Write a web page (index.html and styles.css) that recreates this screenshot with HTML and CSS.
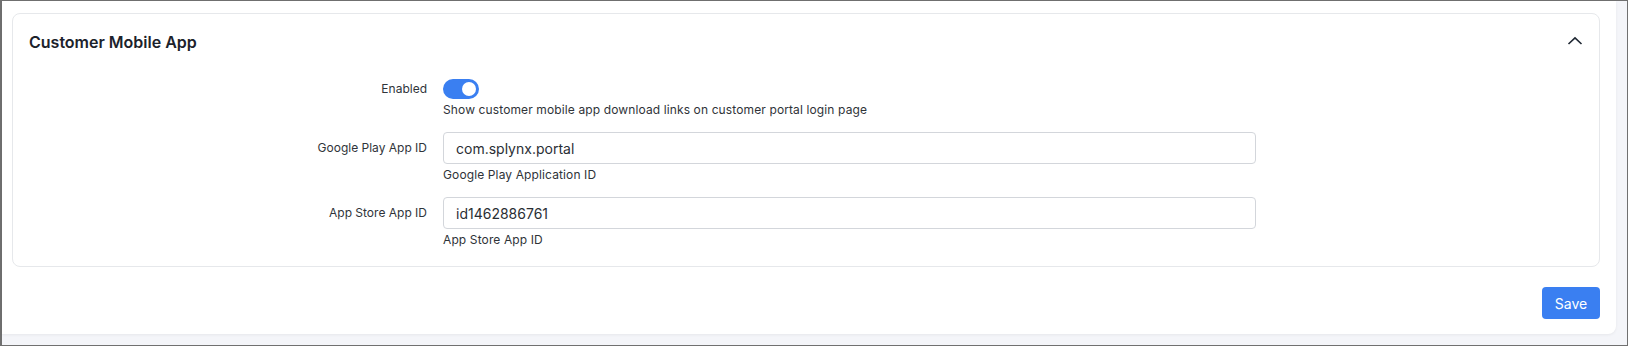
FILE: index.html
```html
<!DOCTYPE html>
<html lang="en">
<head>
    <meta charset="UTF-8">
    <meta name="viewport" content="width=device-width, initial-scale=1.0">
    <title>Customer Mobile App</title>
    <link rel="stylesheet" href="styles.css">
</head>
<body>
    <div class="frame">
        <div class="page">
            <div class="card">
                <div class="card-header">
                    <h2>Customer Mobile App</h2>
                    <button class="collapse-btn" type="button" aria-label="Collapse">
                        <svg width="16" height="10" viewBox="0 0 16 10">
                            <path d="M1.5 8 L8 1.8 L14.5 8" fill="none" stroke="#1f2733" stroke-width="1.6"/>
                        </svg>
                    </button>
                </div>
                <div class="card-body">
                    <div class="form-row">
                        <label class="form-label" for="enabled">Enabled</label>
                        <div class="form-control">
                            <label class="switch">
                                <input type="checkbox" id="enabled" checked>
                                <span class="slider"></span>
                            </label>
                            <div class="help">Show customer mobile app download links on customer portal login page</div>
                        </div>
                    </div>
                    <div class="form-row">
                        <label class="form-label tall" for="googleId">Google Play App ID</label>
                        <div class="form-control">
                            <input type="text" class="text-input" id="googleId" value="com.splynx.portal">
                            <div class="help">Google Play Application ID</div>
                        </div>
                    </div>
                    <div class="form-row">
                        <label class="form-label tall" for="appStoreId">App Store App ID</label>
                        <div class="form-control">
                            <input type="text" class="text-input" id="appStoreId" value="id1462886761">
                            <div class="help">App Store App ID</div>
                        </div>
                    </div>
                </div>
            </div>
            <div class="actions">
                <button class="btn-primary" type="button">Save</button>
            </div>
        </div>
    </div>
</body>
</html>
```

FILE: styles.css
```css
* {
    box-sizing: border-box;
}
html, body {
    margin: 0;
    height: 100%;
}
body {
    font-family: 'Inter', 'Liberation Sans', sans-serif;
    color: #2b2f36;
}
.frame {
    height: 346px;
    border: 1px solid #707070;
    border-left-width: 2px;
    background-color: #f4f5f9;
}
.page {
    background: #ffffff;
    padding: 12px 16px 15px 10px;
    border-radius: 0 0 8px 0;
    margin-right: 11px;
    box-shadow: 0 1px 3px rgba(0, 0, 0, 0.06);
}
.card {
    border: 1px solid #e6e8eb;
    border-radius: 8px;
}
.card-header {
    display: flex;
    align-items: center;
    justify-content: space-between;
    padding: 16px 16px 16px 16px;
}
.card-header h2 {
    margin: 0;
    font-size: 16px;
    line-height: 24px;
    font-weight: 600;
    color: #1c222b;
}
.collapse-btn {
    border: 0;
    background: none;
    padding: 0;
    width: 16px;
    height: 10px;
    display: flex;
    margin-top: -3px;
}
.card-body {
    padding: 9px 0 18px 0;
}
.form-row {
    display: grid;
    grid-template-columns: 414px 813px;
    column-gap: 16px;
    margin-bottom: 14px;
}
.form-row:last-child {
    margin-bottom: 0;
}
.form-label {
    text-align: right;
    font-size: 12px;
    line-height: 20px;
    color: #30343a;
}
.form-label.tall {
    line-height: 32px;
}
.switch {
    display: block;
    position: relative;
    width: 36px;
    height: 20px;
}
.switch input {
    opacity: 0;
    width: 0;
    height: 0;
    position: absolute;
}
.slider {
    display: block;
    width: 36px;
    height: 20px;
    border-radius: 10px;
    background: #3a7ff1;
    position: relative;
}
.slider::after {
    content: "";
    position: absolute;
    top: 3px;
    right: 3px;
    width: 14px;
    height: 14px;
    border-radius: 50%;
    background: #ffffff;
}
.help {
    margin-top: 3px;
    font-size: 12px;
    line-height: 16px;
    letter-spacing: 0.12px;
    color: #2f3338;
}
.text-input {
    display: block;
    width: 100%;
    height: 32px;
    border: 1px solid #d3d6db;
    border-radius: 4px;
    padding: 0 12px;
    font-family: inherit;
    font-size: 14px;
    color: #2a2e34;
    background: #fff;
    outline: none;
}
.actions {
    display: flex;
    justify-content: flex-end;
    margin-top: 20px;
}
.btn-primary {
    background: #3a7ff1;
    color: #ffffff;
    border: 0;
    border-radius: 4px;
    height: 32px;
    width: 58px;
    font-family: inherit;
    font-size: 14px;
}
```
